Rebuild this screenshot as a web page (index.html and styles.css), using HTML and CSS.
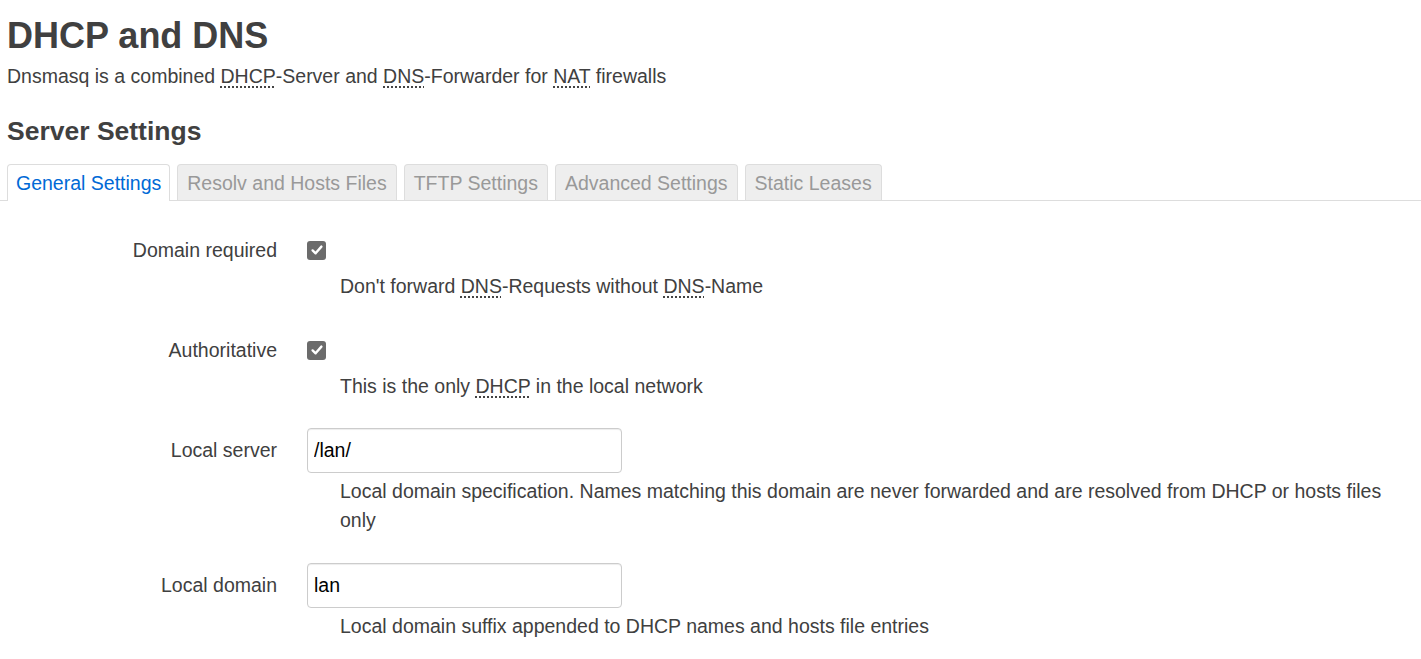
FILE: index.html
```html
<!DOCTYPE html>
<html>
<head>
<meta charset="utf-8">
<link rel="stylesheet" href="styles.css">
</head>
<body>
<div class="head">
  <h2 class="title">DHCP and DNS</h2>
  <div class="intro">Dnsmasq is a combined <abbr title="Dynamic Host Configuration Protocol">DHCP</abbr>-Server and <abbr title="Domain Name System">DNS</abbr>-Forwarder for <abbr title="Network Address Translation">NAT</abbr> firewalls</div>
  <h3 class="section">Server Settings</h3>
</div>
<ul class="tabs">
  <li class="tab active">General Settings</li>
  <li class="tab">Resolv and Hosts Files</li>
  <li class="tab">TFTP Settings</li>
  <li class="tab">Advanced Settings</li>
  <li class="tab">Static Leases</li>
</ul>
<div class="form">
  <div class="row row-cb row-first">
    <div class="lbl lbl-cb">Domain required</div>
    <div class="field">
      <div class="ctl ctl-cb"><span class="cb"><svg viewBox="0 0 18 18" width="18" height="18"><path d="M4.6 9.4 L7.6 12.3 L13.4 5.6" fill="none" stroke="#fff" stroke-width="2.4" stroke-linecap="round" stroke-linejoin="round"/></svg></span></div>
      <div class="help">Don't forward <abbr>DNS</abbr>-Requests without <abbr>DNS</abbr>-Name</div>
    </div>
  </div>
  <div class="row row-cb">
    <div class="lbl lbl-cb">Authoritative</div>
    <div class="field">
      <div class="ctl ctl-cb"><span class="cb"><svg viewBox="0 0 18 18" width="18" height="18"><path d="M4.6 9.4 L7.6 12.3 L13.4 5.6" fill="none" stroke="#fff" stroke-width="2.4" stroke-linecap="round" stroke-linejoin="round"/></svg></span></div>
      <div class="help">This is the only <abbr>DHCP</abbr> in the local network</div>
    </div>
  </div>
  <div class="row">
    <div class="lbl lbl-in">Local server</div>
    <div class="field">
      <div class="ctl ctl-in"><input class="txt" type="text" value="/lan/"></div>
      <div class="help">Local domain specification. Names matching this domain are never forwarded and are resolved from DHCP or hosts files only</div>
    </div>
  </div>
  <div class="row">
    <div class="lbl lbl-in">Local domain</div>
    <div class="field">
      <div class="ctl ctl-in"><input class="txt" type="text" value="lan"></div>
      <div class="help">Local domain suffix appended to DHCP names and hosts file entries</div>
    </div>
  </div>
</div>
</body>
</html>
```
FILE: styles.css
```css
html, body {
  margin: 0;
  padding: 0;
  background: #fff;
}
body {
  font-family: "Liberation Sans", Arial, sans-serif;
  font-size: 19.5px;
  line-height: 1.5;
  color: #404040;
  overflow: hidden;
}
.head {
  padding: 14px 7px 0 7px;
}
.title {
  margin: 0;
  font-size: 36px;
  line-height: 43px;
  font-weight: bold;
  color: #404040;
}
.intro {
  margin-top: 5px;
  line-height: 29px;
}
abbr {
  text-decoration: underline dotted;
  text-underline-offset: 4px;
  cursor: help;
}
.section {
  margin: 25px 0 0 0;
  font-size: 26.5px;
  line-height: 31px;
  font-weight: bold;
  color: #404040;
}
.tabs {
  list-style: none;
  margin: 17px 0 0 0;
  padding: 0 0 0 7px;
  display: flex;
  gap: 7px;
  border-bottom: 1px solid #ddd;
}
.tab {
  height: 35px;
  line-height: 36px;
  padding: 0 9px;
  border: 1px solid #ddd;
  border-bottom: none;
  border-radius: 4px 4px 0 0;
  background: #eee;
  color: #999;
  white-space: nowrap;
}
.tab.active {
  background: #fff;
  color: #0069d6;
  margin-bottom: -1px;
  height: 36px;
  padding: 0 8px;
}
.form {
  padding: 31px 16px 0 0;
}
.row {
  display: grid;
  grid-template-columns: 277px 1fr;
  column-gap: 30px;
  margin-bottom: 28px;
}
.row-cb {
  margin-bottom: 27px;
}
.row-cb.row-first {
  margin-bottom: 31px;
}
.row-cb .help {
  margin-top: 4px;
}
.lbl {
  display: flex;
  align-items: center;
  justify-content: flex-end;
  text-align: right;
}
.lbl-cb { height: 37px; }
.lbl-in { height: 45px; }
.ctl {
  display: flex;
  align-items: center;
}
.ctl-cb { height: 36px; }
.ctl-in { height: 44px; }
.cb {
  width: 19px;
  height: 19px;
  border-radius: 3px;
  background: #6b6b6b;
  display: flex;
  align-items: center;
  justify-content: center;
}
.cb svg { display: block; }
.txt {
  box-sizing: border-box;
  width: 315px;
  height: 45px;
  margin: 0;
  padding: 0 6px;
  border: 1px solid #ccc;
  border-radius: 4px;
  box-shadow: inset 0 1px 1px rgba(0,0,0,0.075);
  font-family: "Liberation Sans", Arial, sans-serif;
  font-size: 19.5px;
  color: #000;
  background: #fff;
  outline: none;
}
.help {
  margin-top: 5px;
  padding-left: 33px;
  line-height: 29px;
}
```
